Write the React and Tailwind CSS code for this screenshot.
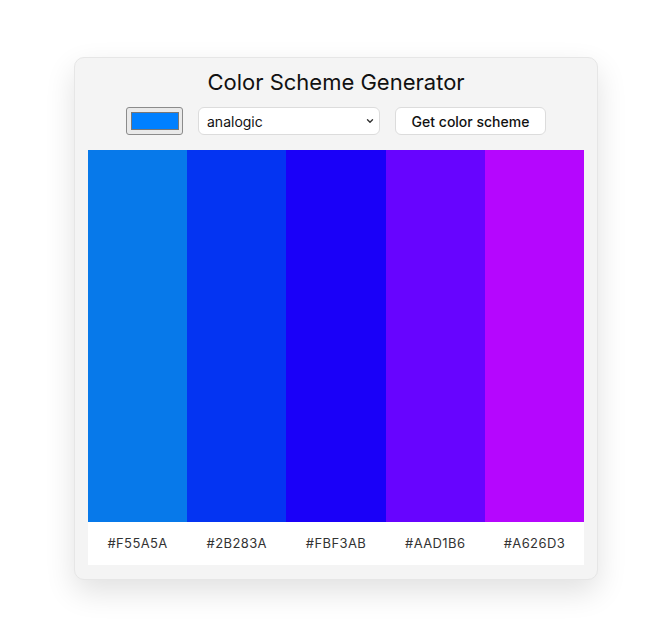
import React from 'react'

const colors = [
  { bg: 'bg-[#0779ea]', hex: '#F55A5A' },
  { bg: 'bg-[#0434f2]', hex: '#2B283A' },
  { bg: 'bg-[#1a00f8]', hex: '#FBF3AB' },
  { bg: 'bg-[#6704ff]', hex: '#AAD1B6' },
  { bg: 'bg-[#b506fe]', hex: '#A626D3' },
]

export default function App() {
  return (
    <div className="min-h-[634px] bg-white pt-[57px] pl-[74px] font-['Inter',sans-serif]">
      <div className="w-[524px] rounded-[10px] border border-[#e6e6e6] bg-[#f4f4f4] px-[13px] pt-[13px] pb-[14px] shadow-[0_12px_30px_rgba(0,0,0,0.12)]">
        <h1 className="text-center text-[22px] font-normal leading-[22px] text-[#111]">
          Color Scheme Generator
        </h1>
        <div className="mt-[14px] flex items-center justify-center gap-[15px]">
          <div className="flex h-[28px] w-[57px] items-center justify-center rounded-[3px] border border-[#8b8b8b] bg-[#e9e9e9]">
            <div className="h-[18px] w-[48px] border border-[#777] bg-[#0080ff]" />
          </div>
          <div className="flex h-[28px] w-[182px] items-center justify-between rounded-[6px] border border-[#dcdcdc] bg-white pl-[8px] pr-[4px] text-[14px] text-[#111]">
            <span>analogic</span>
            <svg width="10" height="10" viewBox="0 0 10 10" fill="none">
              <path d="M2.5 3.8 5 6.3 7.5 3.8" stroke="#333" strokeWidth="1.4" strokeLinecap="round" strokeLinejoin="round" />
            </svg>
          </div>
          <button className="h-[28px] w-[151px] rounded-[6px] border border-[#dcdcdc] bg-white text-[14px] font-medium text-[#111]">
            Get color scheme
          </button>
        </div>
        <div className="mt-[15px] grid grid-cols-5">
          {colors.map((c) => (
            <div key={c.hex} className="flex flex-col">
              <div className={`h-[372px] ${c.bg}`} />
              <div className="flex h-[43px] items-center justify-center bg-white text-[13px] tracking-[0.03em] text-[#333]">
                {c.hex}
              </div>
            </div>
          ))}
        </div>
      </div>
    </div>
  )
}
